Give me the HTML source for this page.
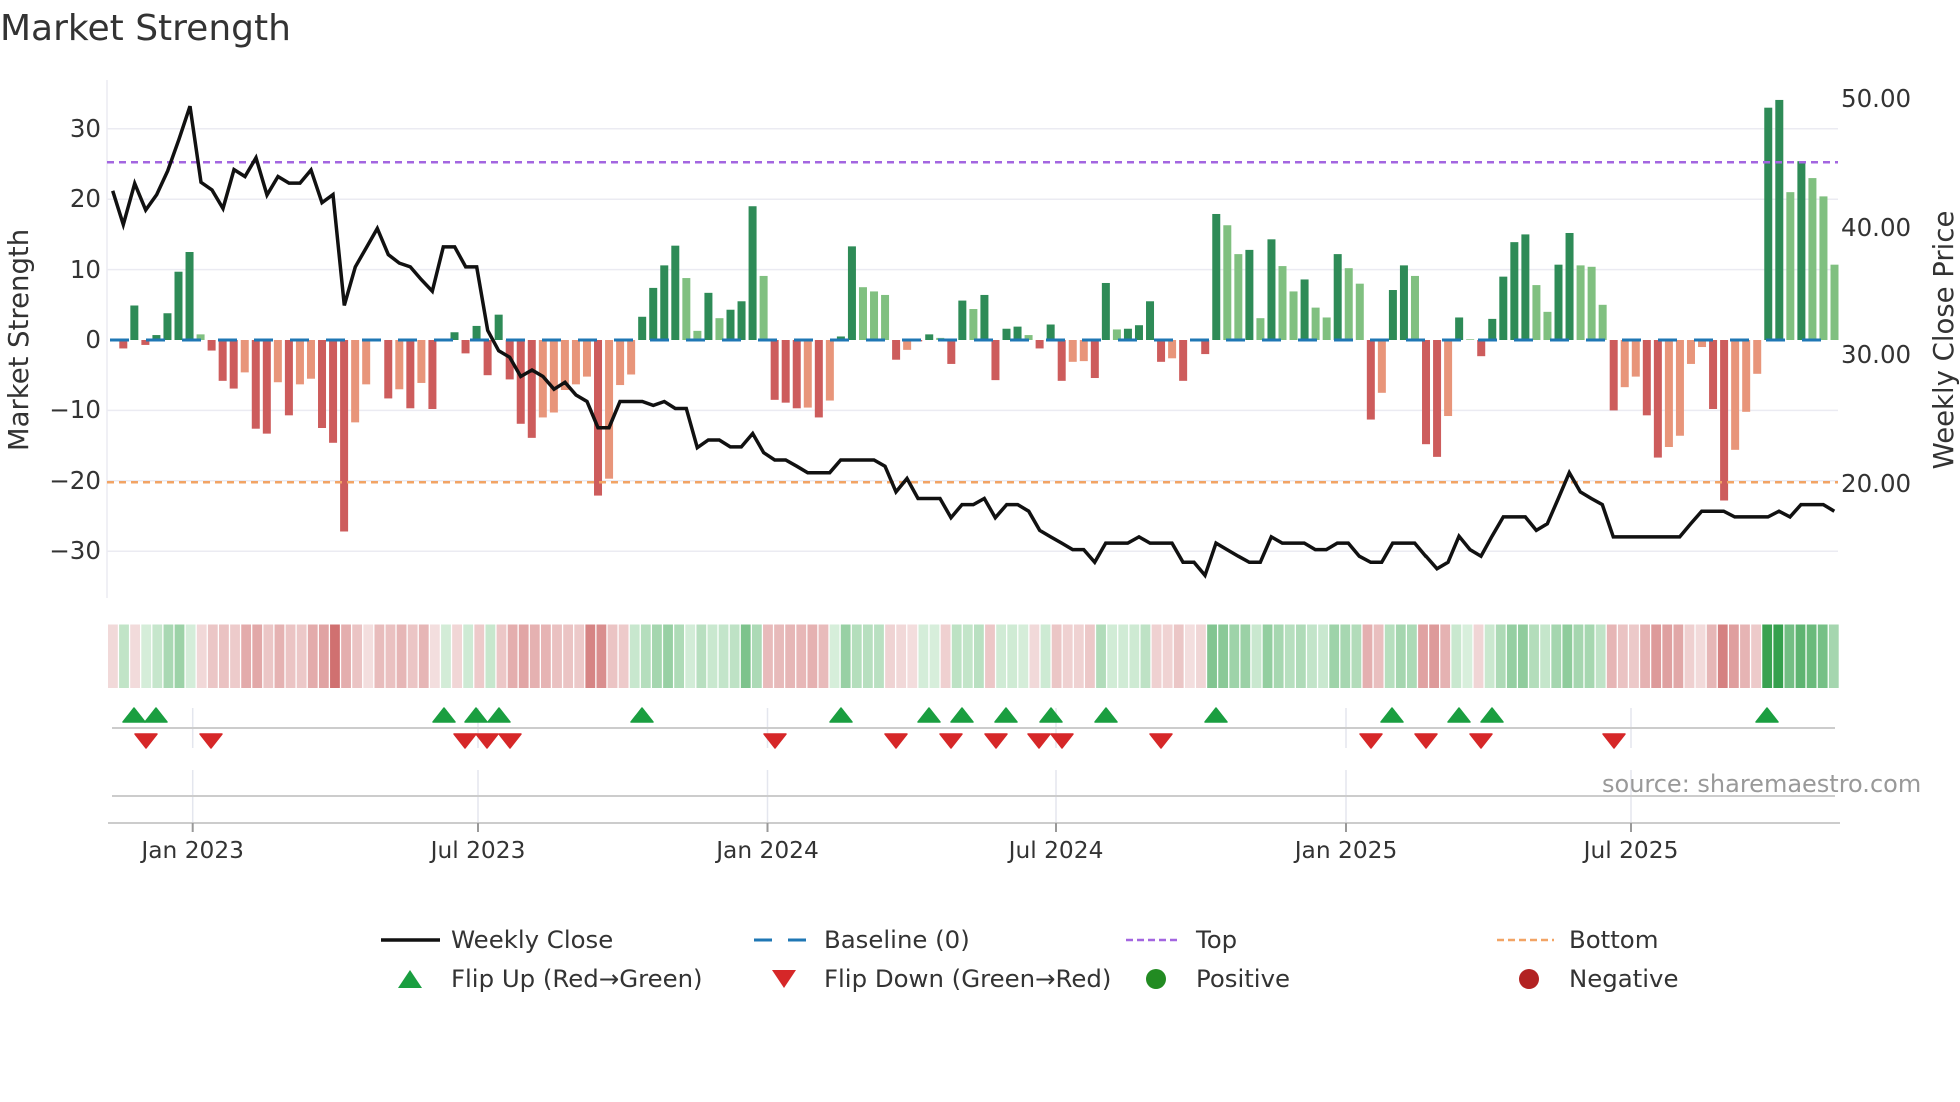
<!DOCTYPE html>
<html><head><meta charset="utf-8"><style>
html,body{margin:0;padding:0;background:#fff;}
svg{display:block;font-family:"DejaVu Sans","Liberation Sans",sans-serif;}
</style></head><body>
<svg id="c" width="1960" height="1102" viewBox="0 0 1960 1102" xmlns="http://www.w3.org/2000/svg">
<rect width="1960" height="1102" fill="#fff"/>
<text x="0" y="40" font-size="36" fill="#333">Market Strength</text>
<g id="grid" stroke="#ebebf2" stroke-width="1.5">
<line x1="107" y1="128.8" x2="1838" y2="128.8"/>
<line x1="107" y1="199.2" x2="1838" y2="199.2"/>
<line x1="107" y1="269.6" x2="1838" y2="269.6"/>
<line x1="107" y1="410.4" x2="1838" y2="410.4"/>
<line x1="107" y1="480.8" x2="1838" y2="480.8"/>
<line x1="107" y1="551.2" x2="1838" y2="551.2"/>
<line x1="107" y1="80" x2="107" y2="598"/>
</g>
<g font-size="24.5" fill="#333" text-anchor="end">
<text x="101" y="137">30</text>
<text x="101" y="207">20</text>
<text x="101" y="278">10</text>
<text x="101" y="348">0</text>
<text x="101" y="418">−10</text>
<text x="101" y="489">−20</text>
<text x="101" y="559">−30</text>
</g>
<g font-size="24.5" fill="#333">
<text x="1841" y="107">50.00</text>
<text x="1841" y="236">40.00</text>
<text x="1841" y="363">30.00</text>
<text x="1841" y="492">20.00</text>
</g>
<text transform="translate(28,340) rotate(-90)" font-size="27.5" fill="#333" text-anchor="middle">Market Strength</text>
<text transform="translate(1953,340) rotate(-90)" font-size="27.5" fill="#333" text-anchor="middle">Weekly Close Price</text>
<g id="bars"></g>
<line x1="110" y1="340" x2="1836" y2="340" stroke="#1f77b4" stroke-width="3" stroke-dasharray="19 17"/>
<line x1="107" y1="162.3" x2="1838" y2="162.3" stroke="#a366e0" stroke-width="2.5" stroke-dasharray="7 5"/>
<line x1="107" y1="482.3" x2="1838" y2="482.3" stroke="#f2a465" stroke-width="2.5" stroke-dasharray="7 5"/>
<polyline id="price" fill="none" stroke="#111" stroke-width="3.5" stroke-linejoin="miter"/>
<g id="heat"></g>
<g stroke="#e4e6ee" stroke-width="1.5" id="vg"></g>
<line x1="112" y1="728" x2="1835" y2="728" stroke="#ccc" stroke-width="2"/>
<line x1="112" y1="796" x2="1835" y2="796" stroke="#ccc" stroke-width="2"/>
<line x1="108" y1="823" x2="1840" y2="823" stroke="#ccc" stroke-width="2"/>
<g id="tri"></g>
<g id="ticks" font-size="23.3" fill="#333" text-anchor="middle"></g>
<text x="1602" y="792" font-size="24" fill="#999">source: sharemaestro.com</text>
<g font-size="24.4" fill="#333">
<line x1="381" y1="940" x2="440" y2="940" stroke="#111" stroke-width="3.5"/>
<text x="451" y="948">Weekly Close</text>
<line x1="754" y1="940" x2="808" y2="940" stroke="#1f77b4" stroke-width="3" stroke-dasharray="18 16"/>
<text x="824" y="948">Baseline (0)</text>
<line x1="1126" y1="940" x2="1181" y2="940" stroke="#a366e0" stroke-width="2.5" stroke-dasharray="7 4"/>
<text x="1196" y="948">Top</text>
<line x1="1497" y1="940" x2="1554" y2="940" stroke="#f2a465" stroke-width="2.5" stroke-dasharray="7 4"/>
<text x="1569" y="948">Bottom</text>
<polygon points="398,988 422,988 410,970" fill="#1a9e40"/>
<text x="451" y="987">Flip Up (Red→Green)</text>
<polygon points="772,970 796,970 784,988" fill="#d62728"/>
<text x="824" y="987">Flip Down (Green→Red)</text>
<circle cx="1156" cy="979" r="10" fill="#228b22"/>
<text x="1196" y="987">Positive</text>
<circle cx="1529" cy="979" r="10" fill="#b22222"/>
<text x="1569" y="987">Negative</text>
</g>
</svg>
<script>
(function(){
var NS="http://www.w3.org/2000/svg";
function el(t,a,p){var e=document.createElementNS(NS,t);for(var k in a)e.setAttribute(k,a[k]);p.appendChild(e);return e;}
var v=[-1.2,4.9,-0.7,0.7,3.8,9.7,12.5,0.8,-1.5,-5.8,-6.9,-4.6,-12.6,-13.3,-6,-10.7,-6.3,-5.5,-12.5,-14.6,-27.2,-11.7,-6.3,0,-8.3,-7,-9.7,-6.1,-9.8,0,1.1,-1.9,2,-5,3.6,-5.6,-11.9,-13.9,-11,-10.3,
-7.1,-6.3,-5.2,-22.1,-19.7,-6.4,-4.9,3.3,7.4,10.6,13.4,8.8,1.3,6.7,3.1,4.3,5.5,19,9.1,-8.5,-8.9,-9.7,-9.6,-11,-8.6,0.5,13.3,7.5,6.9,6.4,-2.8,-1.4,-0.2,0.8,0.3,-3.4,5.6,4.4,6.4,-5.7,
1.6,1.9,0.7,-1.2,2.2,-5.8,-3.1,-3,-5.4,8.1,1.5,1.6,2.1,5.5,-3.1,-2.6,-5.8,0,-2,17.9,16.3,12.2,12.8,3.1,14.3,10.5,6.9,8.6,4.6,3.2,12.2,10.2,8,-11.3,-7.5,7.1,10.6,9.1,-14.8,-16.6,
-10.8,3.2,0.1,-2.3,3,9,13.9,15,7.8,4,10.7,15.2,10.6,10.4,5,-10,-6.7,-5.2,-10.7,-16.7,-15.2,-13.6,-3.4,-1,-9.8,-22.8,-15.6,-10.2,-4.8,33,34.1,21,25.4,23,20.4,10.7];
var t="RGRGGGGgRRRrRRrRrrRRRrr-RrRrR-GRGRGRRRrrrrrRrrrGGGGggGgGGGgRRRrRrGGgggRr-GgRGgGRGGgRGRrrRGgGGGRrR-RGggGgGggGggGggRrGGgRRrGgRGGGGggGGgggRrrRRrrrrRRrrrGGgGggg";
var col={R:"#cd5c5c",r:"#e8957a",G:"#2e8b57",g:"#80c080","-":"#cd5c5c"};
var bars=document.getElementById("bars"),heat=document.getElementById("heat");
function X(i){return 123.3+i*11.04;}
function lerp(a,b,s){return Math.round(a+(b-a)*s);}
var cw=(1840-108)/v.length;
for(var i=0;i<v.length;i++){
 var x=X(i),val=v[i],y=340-7.04*val;
 var top=Math.min(y,340),h=Math.abs(y-340);
 if(h>0.5) el("rect",{x:x-4,y:top,width:8,height:h,fill:col[t[i]]||"#cd5c5c"},bars);
 var c;
 if(val>0){var s=Math.min(val/34,1);c="rgb("+lerp(216,53,s)+","+lerp(239,160,s)+","+lerp(220,77,s)+")";}
 else{var s=Math.min(-val/27,1);c="rgb("+lerp(243,208,s)+","+lerp(222,112,s)+","+lerp(222,112,s)+")";}
 el("rect",{x:108+i*cw,y:624.5,width:cw-1.3,height:63.5,fill:c},heat);
}
var segs=[[100,[38,262,70,350,104,243,137,312,170,272,203,210,237,128,270,42,303,240,336,260,369,308,402,207,435,225,468,176,501,273,534,225,567,242,600,242,633,208,666,293,699,272,733,560,766,460,799,410,832,360,865,428,898,450,931,460,964,493,997,523,1030,408,1064,408,1097,460,1130,460,1163,625,1196,678,1229,695,1262,745,1296,728,1329,745,1362,778]],
[540,[75,760,108,793,141,810,174,878,207,878,240,810,273,810,307,810,340,820,373,810,406,828,439,828,472,930,505,910,538,910,571,928,604,928,638,893,671,943,704,962,737,962,770,978,803,995,836,995,869,995,902,962,935,962,969,962,1002,962,1035,978,1068,1045,1101,1010,1134,1062,1167,1062,1200,1062,1233,1112,1266,1078,1300,1078,1333,1062,1366,1112]],
[980,[80,1078,113,1078,146,1095,179,1145,212,1162,245,1178,278,1195,311,1195,344,1228,377,1178,410,1178,443,1178,477,1162,510,1178,543,1178,576,1178,609,1228,642,1228,675,1262,708,1178,741,1195,775,1212,808,1228,841,1228,874,1162,907,1178,940,1178,973,1178,1006,1195,1039,1195,1072,1178,1105,1178,1138,1212,1172,1228,1205,1228,1238,1178,1271,1178,1304,1178,1337,1212]],
[1420,[18,1212,51,1245,84,1228,117,1160,150,1195,183,1212,216,1160,250,1110,283,1110,316,1110,349,1145,382,1128,415,1062,448,995,481,1045,514,1062,547,1078,580,1162,613,1162,647,1162,680,1162,713,1162,746,1162,779,1162,812,1128,845,1095,878,1095,911,1095,944,1110,978,1110,1011,1110,1044,1110,1077,1095,1110,1110,1143,1078,1177,1078,1210,1078,1243,1095]]];
var pts=[];
segs.forEach(function(s){for(var j=0;j<s[1].length;j+=2){pts.push((s[0]+s[1][j]/3).toFixed(1)+","+(90+s[1][j+1]/2.6).toFixed(1));}});
document.getElementById("price").setAttribute("points",pts.join(" "));
var tri=document.getElementById("tri");
[134,156,444,476,499,642,841,929,962,1006,1051,1106,1216,1392,1459,1492,1767].forEach(function(x){
 el("polygon",{points:(x-11)+",722 "+(x+11)+",722 "+x+",708",fill:"#1a9e40","stroke":"#1a9e40","stroke-linejoin":"round","stroke-width":"1.5"},tri);});
[146,211,465,487,510,775,896,951,996,1039,1062,1161,1371,1426,1481,1614].forEach(function(x){
 el("polygon",{points:(x-11)+",734 "+(x+11)+",734 "+x+",748",fill:"#d62728","stroke":"#d62728","stroke-linejoin":"round","stroke-width":"1.5"},tri);});
var vg=document.getElementById("vg"),tk=document.getElementById("ticks");
[[192.7,"Jan 2023"],[478,"Jul 2023"],[767.5,"Jan 2024"],[1056,"Jul 2024"],[1346,"Jan 2025"],[1631,"Jul 2025"]].forEach(function(a){
 el("line",{x1:a[0],y1:708,x2:a[0],y2:748},vg);
 el("line",{x1:a[0],y1:770,x2:a[0],y2:822},vg);
 el("line",{x1:a[0],y1:823,x2:a[0],y2:832,stroke:"#999","stroke-width":"2"},tk);
 var tx=el("text",{x:a[0],y:858},tk);tx.textContent=a[1];
});
})();
</script>
</body></html>
